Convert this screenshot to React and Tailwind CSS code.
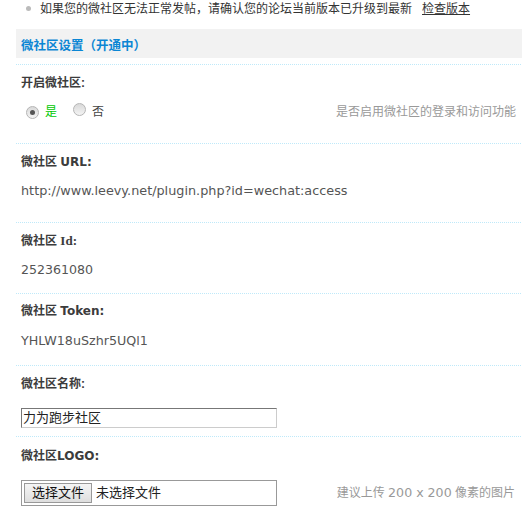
export default function App() {
  const cjk = "font-['Liberation_Sans','Noto_Sans_CJK_SC',sans-serif]";
  const verdana = "font-['DejaVu_Sans','Noto_Sans_CJK_SC',sans-serif]";

  const Radio = ({ checked }) => (
    <span className="inline-flex h-[13px] w-[13px] items-center justify-center rounded-full border border-[#b5b5b5] bg-gradient-to-b from-[#d9d9d9] to-[#f4f4f4]">
      {checked && <span className="h-[5px] w-[5px] rounded-full bg-[#555]" />}
    </span>
  );

  const Label = ({ children }) => (
    <div className={`h-[24px] leading-[24px] pl-[5px] text-[12px] font-bold text-[#3c3c3c] ${cjk}`}>
      {children}
    </div>
  );

  // dotted rule, light blue
  const Divider = () => (
    <div className="h-px bg-[linear-gradient(to_right,#bfe9f9_1px,transparent_1px)] bg-[length:2px_1px]" />
  );

  return (
    <div className={`w-[522px] h-[519px] overflow-hidden bg-white text-[12px] ${cjk}`}>
      {/* notice */}
      <div className="flex h-[17px] items-center pl-[26px] text-[#333]">
        <span className="mr-[9px] h-[5px] w-[5px] rounded-full bg-[#bbb]" />
        <span>如果您的微社区无法正常发帖，请确认您的论坛当前版本已升级到最新</span>
        <a className="ml-[10px] text-[#333] underline">检查版本</a>
      </div>

      <div className="ml-[16px] mt-[12px]">
        {/* header */}
        <div className="h-[29px] bg-[#f2f2f2] pl-[5px] pt-[9px] text-[12.5px] font-bold leading-[16px] text-[#0b86d4]">
          微社区设置（开通中）
        </div>
        <div className="h-[6px]" />
        <Divider />

        {/* enable */}
        <div className="pt-[6px] pb-[19px]">
          <Label>开启微社区:</Label>
          <div className="mt-[5px] flex h-[24px] items-center pl-[10px] pr-[6px]">
            <Radio checked />
            <span className="ml-[6px] text-[#00c800]">是</span>
            <span className="ml-[16px]">
              <Radio />
            </span>
            <span className="ml-[6px] text-[#444]">否</span>
            <span className="ml-auto text-[#999]">是否启用微社区的登录和访问功能</span>
          </div>
        </div>
        <Divider />

        {/* url */}
        <div className="pt-[6px] pb-[19px]">
          <Label>
            微社区 <span className={verdana}>URL:</span>
          </Label>
          <div className={`mt-[5px] h-[24px] leading-[24px] pl-[5px] text-[12.8px] text-[#555] ${verdana}`}>
            http://www.leevy.net/plugin.php?id=wechat:access
          </div>
        </div>
        <Divider />

        {/* id */}
        <div className="pt-[6px] pb-[11px]">
          <Label>
            微社区 <span className="font-['Liberation_Serif',serif] text-[13px]">Id:</span>
          </Label>
          <div className={`mt-[5px] h-[24px] leading-[24px] pl-[5px] text-[12.6px] text-[#555] ${verdana}`}>
            252361080
          </div>
        </div>
        <Divider />

        {/* token */}
        <div className="pt-[5px] pb-[12px]">
          <Label>
            微社区 <span className={verdana}>Token:</span>
          </Label>
          <div className={`mt-[6px] h-[24px] leading-[24px] pl-[5px] text-[12.7px] text-[#555] ${verdana}`}>
            YHLW18uSzhr5UQl1
          </div>
        </div>
        <Divider />

        {/* name */}
        <div className="pt-[6px] pb-[8px]">
          <Label>微社区名称:</Label>
          <div className="mt-[12px] pl-[5px]">
            <div className="flex h-[20px] w-[256px] items-center border border-t-[#777] border-l-[#777] border-r-[#ccc] border-b-[#ccc] pl-[1px] text-[13px] text-[#222]">
              力为跑步社区
            </div>
          </div>
        </div>
        <Divider />

        {/* logo */}
        <div className="pt-[7px]">
          <Label>
            微社区<span className={verdana}>LOGO:</span>
          </Label>
          <div className="mt-[12px] flex items-center pl-[5px] pr-[7px]">
            <div className="flex h-[26px] w-[256px] items-center border border-[#999] pl-[2px]">
              <span className="flex h-[20px] items-center border border-[#999] bg-gradient-to-b from-[#f5f5f5] to-[#dedede] px-[7px] text-[13px] text-[#111]">
                选择文件
              </span>
              <span className="ml-[4px] text-[13px] text-[#222]">未选择文件</span>
            </div>
            <span className="ml-auto text-[#999]">
              建议上传 <span className={`text-[12.6px] ${verdana}`}>200 x 200</span> 像素的图片
            </span>
          </div>
        </div>
      </div>
    </div>
  );
}
